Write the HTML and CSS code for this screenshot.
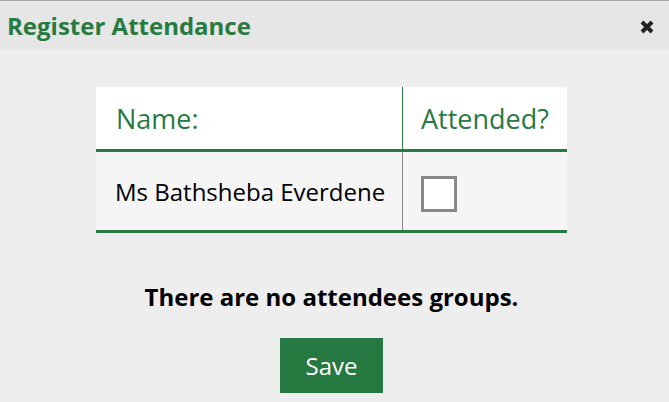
FILE: index.html
```html
<!DOCTYPE html>
<html>
<head>
<meta charset="utf-8">
<link rel="stylesheet" href="styles.css">
</head>
<body>
<div class="dialog">
  <div class="titlebar">
    <h1 class="title">Register Attendance</h1>
    <button class="close" aria-label="Close">
      <svg width="16" height="16" viewBox="0 0 16 16"><path d="M3 3 L13 13 M13 3 L3 13" stroke="#222" stroke-width="4" stroke-linecap="butt"/></svg>
    </button>
  </div>
  <div class="content">
    <table class="register">
      <thead>
        <tr><th class="col-name">Name:</th><th class="col-att">Attended?</th></tr>
      </thead>
      <tbody>
        <tr><td class="col-name">Ms Bathsheba Everdene</td><td class="col-att"><span class="checkbox"></span></td></tr>
      </tbody>
    </table>
    <p class="notice">There are no attendees groups.</p>
    <button class="save">Save</button>
  </div>
</div>
</body>
</html>
```
FILE: styles.css
```css
html, body {
  margin: 0;
  padding: 0;
  background: #eeeeee;
  font-family: "Open Sans", "DejaVu Sans", sans-serif;
}
.dialog {
  width: 669px;
  height: 402px;
  overflow: hidden;
  background: #eeeeee;
}
.titlebar {
  height: 49px;
  border-top: 1px solid #a6a6a6;
  background: #e6e6e6;
  display: flex;
  align-items: center;
  justify-content: space-between;
  padding: 0 14px 0 7px;
}
.title {
  margin: 0;
  font-size: 24px;
  font-weight: 700;
  color: #267a42;
}
.close {
  border: 0;
  background: transparent;
  padding: 0;
  width: 16px;
  height: 16px;
  display: flex;
  margin-top: 3px;
}
.content {
  display: flex;
  flex-direction: column;
  align-items: center;
  padding: 37px 6px 0 0;
}
.register {
  width: 471px;
  border-collapse: collapse;
}
.register th {
  background: #ffffff;
  height: 62px;
  padding: 0 0 0 20px;
  text-align: left;
  font-weight: 400;
  font-size: 27px;
  color: #267a42;
  border-bottom: 3px solid #267a42;
}
.register th.col-name { width: 286px; border-right: 1px solid #267a42; }
.register th.col-att { padding-left: 18px; }
.register td {
  background: #f5f5f5;
  height: 78px;
  padding: 0 0 0 19px;
  font-size: 24px;
  color: #000;
  border-bottom: 3px solid #267a42;
}
.register td.col-name { border-right: 1px solid #888; }
.register td.col-att { padding-left: 18px; }
.checkbox {
  display: block;
  width: 30px;
  height: 30px;
  margin-top: 6px;
  border: 3px solid #888;
  background: #fff;
}
.notice {
  margin: 47px 0 0 0;
  font-size: 24px;
  font-weight: 700;
  color: #000;
}
.save {
  margin-top: 25px;
  width: 103px;
  height: 55px;
  border: 0;
  background: #267841;
  color: #fff;
  font-family: "Open Sans", sans-serif;
  font-size: 24px;
}
```
